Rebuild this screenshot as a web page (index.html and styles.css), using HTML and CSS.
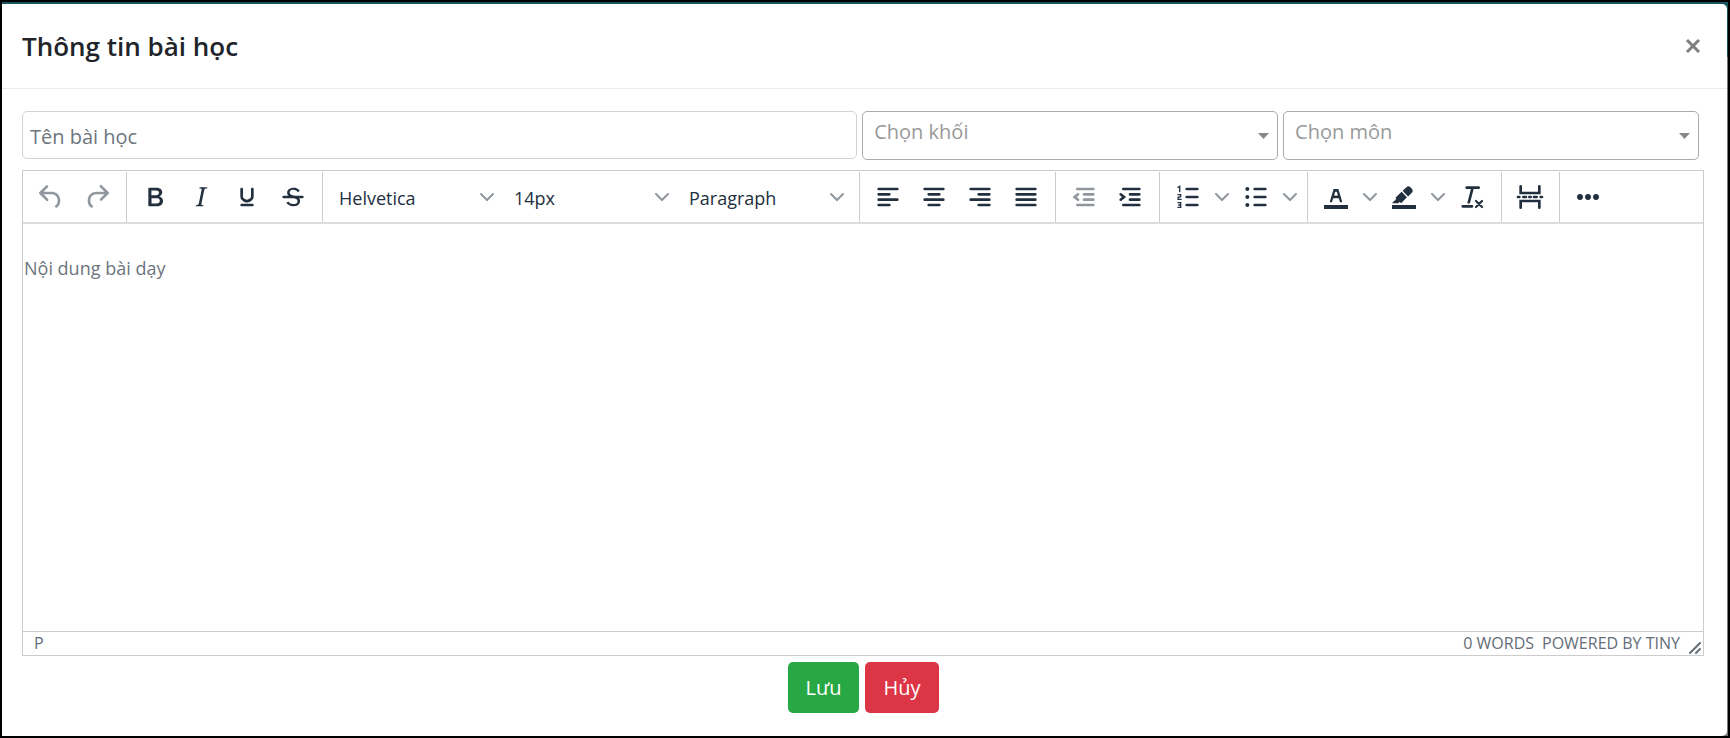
FILE: index.html
```
<!DOCTYPE html>
<html lang="vi">
<head>
    <meta charset="UTF-8">
    <title>Thông tin bài học</title>
    <link rel="stylesheet" href="styles.css">
</head>
<body>
<div class="page">
    <div class="modal">
        <!-- header -->
        <div class="modal-header">
            <h4 class="modal-title">Thông tin bài học</h4>
            <button class="close" type="button" aria-label="Close">
                <svg width="16" height="16" viewBox="0 0 16 16"><path d="M2 2l12 12M14 2L2 14" stroke="#7f7f7f" stroke-width="3"/></svg>
            </button>
        </div>
        <form class="modal-body">
            <div class="fields">
                <input class="name" type="text" placeholder="Tên bài học" aria-label="Tên bài học">
                <div class="pick">
                    <select aria-label="Chọn khối"><option>Chọn khối</option></select>
                    <svg width="12" height="6" viewBox="0 0 12 6"><path d="M0 0h11L5.500 6z" fill="#888"/></svg>
                </div>
                <div class="pick">
                    <select aria-label="Chọn môn"><option>Chọn môn</option></select>
                    <svg width="12" height="6" viewBox="0 0 12 6"><path d="M0 0h11L5.500 6z" fill="#888"/></svg>
                </div>
            </div>

            <!-- editor -->
            <div class="editor">
                <div class="toolbar">
                    <div class="group">
                        <button class="btn" type="button" aria-label="Undo" disabled>
                            <svg class="icon" viewBox="0 0 24 24"><path d="M6.400 8H12c3.700 0 6.200 2 6.800 5.100.6 2.700-.4 5.600-2.300 6.800a1 1 0 01-1-1.800c1.100-.6 1.800-2.700 1.400-4.600-.5-2.100-2.100-3.500-4.900-3.500H6.400l3.300 3.300a1 1 0 11-1.400 1.400l-5-5a1 1 0 010-1.400l5-5a1 1 0 011.400 1.400L6.400 8z"/></svg>
                        </button>
                        <button class="btn" type="button" aria-label="Redo" disabled>
                            <svg class="icon" viewBox="0 0 24 24"><path d="M17.600 10H12c-2.800 0-4.400 1.400-4.900 3.500-.4 2 .3 4 1.400 4.600a1 1 0 11-1 1.800c-2-1.200-2.900-4.100-2.300-6.800.6-3 3-5.100 6.800-5.100h5.600l-3.300-3.300a1 1 0 111.400-1.400l5 5a1 1 0 010 1.400l-5 5a1 1 0 01-1.400-1.400l3.300-3.300z"/></svg>
                        </button>
                    </div>
                    <div class="group">
                        <button class="btn" type="button" aria-label="Bold">
                            <svg class="icon" viewBox="0 0 24 24"><path d="M7.800 19c-.3 0-.5 0-.6-.2l-.2-.5V5.700c0-.2 0-.4.200-.5l.6-.2h5c1.500 0 2.700.3 3.500 1 .7.600 1.100 1.400 1.100 2.500a3 3 0 01-.6 1.900c-.4.600-1 1-1.600 1.200.4.100.9.300 1.300.6s.8.700 1 1.200c.4.400.5 1 .5 1.600 0 1.300-.4 2.300-1.300 3-.8.700-2.100 1-3.800 1H7.800zm5-8.300c.6 0 1.200-.1 1.600-.5.400-.3.600-.7.600-1.300 0-1.100-.8-1.700-2.300-1.700H9.300v3.500h3.400zm.5 6c.7 0 1.300-.1 1.700-.4.400-.4.600-.9.600-1.500s-.2-1-.7-1.400c-.4-.3-1-.4-2-.4H9.400v3.800h4z" fill-rule="evenodd"/></svg>
                        </button>
                        <button class="btn" type="button" aria-label="Italic">
                            <svg class="icon" viewBox="0 0 24 24"><path d="M16.700 4.700l-.1.900h-.3c-.6 0-1 0-1.400.3-.3.300-.4.600-.5 1.100l-2.100 9.800v.6c0 .5.400.8 1.400.8h.2l-.2.800H8l.2-.8h.2c1.100 0 1.800-.5 2-1.500l2-9.800.1-.5c0-.6-.4-.8-1.400-.8h-.3l.2-.9h5.800z"/></svg>
                        </button>
                        <button class="btn" type="button" aria-label="Underline">
                            <svg class="icon" viewBox="0 0 24 24"><path d="M16 5c.6 0 1 .4 1 1v5.500a4 4 0 01-.4 1.800l-1 1.400a5.300 5.300 0 01-5.500 1 5 5 0 01-1.600-1c-.5-.4-.8-.9-1.100-1.400a4 4 0 01-.4-1.800V6c0-.6.4-1 1-1s1 .4 1 1v5.500c0 .3 0 .6.200 1l.6.700a3.300 3.300 0 002.200.8 3.400 3.400 0 002.200-.8c.3-.2.400-.5.600-.8l.2-.9V6c0-.6.4-1 1-1zM8 17h8c.6 0 1 .4 1 1s-.4 1-1 1H8a1 1 0 010-2z"/></svg>
                        </button>
                        <button class="btn" type="button" aria-label="Strikethrough">
                            <svg class="icon" viewBox="0 0 24 24"><path d="M15.600 8.500c-.5-.7-1-1.100-1.300-1.300-.6-.4-1.300-.6-2-.6-2.700 0-2.800 1.700-2.800 2.100 0 1.600 1.800 2 3.200 2.300 4.400.9 4.600 2.800 4.600 3.900 0 1.400-.7 4.100-5 4.100A6.200 6.200 0 017 16.400l1.500-1.100c.4.600 1.600 2 3.700 2 1.600 0 2.500-.4 3-1.200.4-.8.300-2-.8-2.600-.7-.4-1.600-.7-2.900-1-1-.2-3.900-.8-3.900-3.600C7.600 6 10.300 5 12.400 5c2.900 0 4.200 1.600 4.700 2.400l-1.500 1.100z"/><path d="M5 11h14a1 1 0 010 2H5a1 1 0 010-2z"/></svg>
                        </button>
                    </div>
                    <div class="group">
                        <div class="drop">
                            <select aria-label="Fonts"><option>Helvetica</option></select>
                            <svg class="chevron" viewBox="0 0 14 14"><path d="M1 4l6 6 6-6"/></svg>
                        </div>
                        <div class="drop">
                            <select aria-label="Font sizes"><option>14px</option></select>
                            <svg class="chevron" viewBox="0 0 14 14"><path d="M1 4l6 6 6-6"/></svg>
                        </div>
                        <div class="drop">
                            <select aria-label="Blocks"><option>Paragraph</option></select>
                            <svg class="chevron" viewBox="0 0 14 14"><path d="M1 4l6 6 6-6"/></svg>
                        </div>
                    </div>
                    <div class="group">
                        <button class="btn" type="button" aria-label="Align left">
                            <svg class="icon line" viewBox="0 0 24 24"><path d="M5 6h14M5 10h8M5 14h14M5 18h8"/></svg>
                        </button>
                        <button class="btn" type="button" aria-label="Align center">
                            <svg class="icon line" viewBox="0 0 24 24"><path d="M5 6h14M8 10h8M5 14h14M8 18h8"/></svg>
                        </button>
                        <button class="btn" type="button" aria-label="Align right">
                            <svg class="icon line" viewBox="0 0 24 24"><path d="M5 6h14M11 10h8M5 14h14M11 18h8"/></svg>
                        </button>
                        <button class="btn" type="button" aria-label="Justify">
                            <svg class="icon line" viewBox="0 0 24 24"><path d="M5 6h14M5 10h14M5 14h14M5 18h14"/></svg>
                        </button>
                    </div>
                    <div class="group">
                        <button class="btn" type="button" aria-label="Decrease indent" disabled>
                            <svg class="icon line" viewBox="0 0 24 24"><path d="M7 6h12M12 10h7M12 14h7M7 18h12M7.500 10L5 12l2.500 2"/></svg>
                        </button>
                        <button class="btn" type="button" aria-label="Increase indent">
                            <svg class="icon line" viewBox="0 0 24 24"><path d="M7 6h12M12 10h7M12 14h7M7 18h12M5 10l2.500 2L5 14"/></svg>
                        </button>
                    </div>
                    <div class="group">
                        <button class="btn" type="button" aria-label="Numbered list">
                            <svg class="icon line" viewBox="0 0 24 24"><path d="M11 6h8M11 12h8M11 18h8"/><path class="thin" d="M4.500 4.800L5.800 4v4M4.500 10.200h2v1.600l-1.900.4v1.600h2.200M4.500 16.200h2v3.600h-2M5 18h1.500"/></svg>
                        </button>
                        <button class="arrow" type="button" aria-label="Numbered list styles">
                            <svg class="chevron" viewBox="0 0 14 14"><path d="M1 4l6 6 6-6"/></svg>
                        </button>
                        <button class="btn" type="button" aria-label="Bullet list">
                            <svg class="icon line" viewBox="0 0 24 24"><path d="M11 6h8M11 12h8M11 18h8"/><path class="dots" d="M5.500 6h0M5.500 12h0M5.500 18h0"/></svg>
                        </button>
                        <button class="arrow" type="button" aria-label="Bullet list styles">
                            <svg class="chevron" viewBox="0 0 14 14"><path d="M1 4l6 6 6-6"/></svg>
                        </button>
                    </div>
                    <div class="group">
                        <button class="btn" type="button" aria-label="Text color">
                            <svg class="icon" viewBox="0 0 24 24"><path d="M3 18h18v3H3zM8.700 16h-.8a.5.5 0 01-.5-.6l2.700-9c.1-.3.3-.4.5-.4h2.800c.2 0 .4.100.5.400l2.700 9a.5.5 0 01-.5.600h-.8a.5.5 0 01-.4-.4l-.7-2.200c0-.3-.3-.4-.5-.4h-3.400c-.2 0-.4.100-.5.400l-.7 2.200c0 .3-.2.400-.4.400zm2.600-7.600l-.6 2a.5.500 0 00.5.600h1.600a.5.500 0 00.5-.6l-.6-2c0-.3-.3-.4-.5-.4h-.4c-.2 0-.4.100-.5.400z" fill-rule="evenodd"/></svg>
                        </button>
                        <button class="arrow" type="button" aria-label="Text color menu">
                            <svg class="chevron" viewBox="0 0 14 14"><path d="M1 4l6 6 6-6"/></svg>
                        </button>
                        <button class="btn" type="button" aria-label="Background color">
                            <svg class="icon" viewBox="0 0 24 24"><path d="M3 18h18v3H3z"/><path d="M7.700 16.700H3l3.300-3.300-.7-.8L10.200 8l4 4.100-4 4.200c-.2.200-.6.200-.8 0l-.6-.7-1.100 1.100zm5-7.500L11 7.400l3-2.900a2 2 0 012.600 0L18 6c.7.700.7 2 0 2.700l-2.900 2.900-1.800-1.800-.5-.6"/></svg>
                        </button>
                        <button class="arrow" type="button" aria-label="Background color menu">
                            <svg class="chevron" viewBox="0 0 14 14"><path d="M1 4l6 6 6-6"/></svg>
                        </button>
                        <button class="btn" type="button" aria-label="Clear formatting">
                            <svg class="icon" viewBox="0 0 24 24"><path d="M13.200 6a1 1 0 010 .2l-2.600 10a1 1 0 01-1 .8h-.2a.8.800 0 01-.8-1l2.600-10H8a1 1 0 110-2h9a1 1 0 010 2h-3.800zM5 18h7a1 1 0 010 2H5a1 1 0 010-2z"/><path d="M15 15l4.500 4.500M19.500 15L15 19.500" stroke="currentColor" stroke-width="1.600" stroke-linecap="round"/></svg>
                        </button>
                    </div>
                    <div class="group">
                        <button class="btn" type="button" aria-label="Page break">
                            <svg class="icon line" viewBox="0 0 24 24"><path d="M5 4v5h14V4M5 20v-5h14v5"/><path class="dash" d="M3 12h1M7 12h2M11.500 12h1M15 12h2M20 12h1"/></svg>
                        </button>
                    </div>
                    <div class="group">
                        <button class="btn" type="button" aria-label="More">
                            <svg class="icon" viewBox="0 0 24 24"><circle cx="6" cy="12" r="2.200"/><circle cx="12" cy="12" r="2.200"/><circle cx="18" cy="12" r="2.200"/></svg>
                        </button>
                    </div>
                </div>
                <textarea class="content" placeholder="Nội dung bài dạy" aria-label="Nội dung bài dạy"></textarea>
                <div class="statusbar">
                    <span class="path">P</span>
                    <span>0 WORDS</span>
                    <a href="#">POWERED BY TINY</a>
                    <svg class="resize" viewBox="0 0 14 14"><path d="M2 12L12 2M8 12l4-4"/></svg>
                </div>
            </div>

            <div class="actions">
                <button class="save" type="button">Lưu</button>
                <button class="cancel" type="button">Hủy</button>
            </div>
        </form>
    </div>
</div>
</body>
</html>
```
FILE: styles.css
```
*{
    box-sizing: border-box;
}
body{
    margin: 0;
    font-family: "Open Sans", "Noto Sans", sans-serif;
    font-size: 20px;
    color: #212529;
}
button, input, select, textarea{
    font-family: inherit;
    margin: 0;
}
.page{
    display: flex;
    min-height: 100vh;
    border: 2px solid #000;
    background: linear-gradient(#17555f 55px, #777 55px);
    padding: 2px 1px 0 0;
}
.modal{
    flex: 1;
    display: flex;
    flex-direction: column;
    background-color: #fff;
    border-radius: 0 5px 5px 0;
}
/* header */
.modal-header{
    display: flex;
    justify-content: space-between;
    align-items: center;
    height: 85px;
    padding: 0 26px 0 20px;
    border-bottom: 1px solid #e9ecef;
}
.modal-title{
    margin: 0;
    font-size: 26px;
    font-weight: 600;
    line-height: 38px;
}
.close{
    display: flex;
    padding: 0;
    border: 0;
    background: none;
}
.modal-body{
    flex: 1;
    display: flex;
    flex-direction: column;
    padding: 22px 23px 23px 20px;
}
/* fields */
.fields{
    display: flex;
    align-items: flex-start;
    gap: 5px;
    padding-right: 5px;
    margin-bottom: 10px;
}
.name{
    flex: 1;
    min-width: 0;
    height: 48px;
    padding: 2px 7px 0;
    font-size: 20px;
    border: 1px solid #ced4da;
    border-radius: 5px;
}
.name::placeholder{
    color: #6c757d;
}
.pick{
    width: 24.8%;
    display: grid;
    align-items: center;
}
.pick select{
    grid-area: 1 / 1;
    width: 100%;
    height: 49px;
    padding: 0 30px 9px 11px;
    font-size: 20px;
    color: #999;
    background-color: #fff;
    border: 1px solid #aaa;
    border-radius: 5px;
    appearance: none;
}
.pick svg{
    grid-area: 1 / 1;
    justify-self: end;
    margin-right: 8px;
    pointer-events: none;
}
/* editor */
.editor{
    flex: 1;
    display: flex;
    flex-direction: column;
    border: 1px solid #ccc;
}
.toolbar{
    display: flex;
    padding-top: 1px;
    border-bottom: 2px solid #ddd;
}
.group{
    display: flex;
    align-items: center;
    height: 50px;
    padding: 0 6px 0 5px;
    border-right: 1px solid #ccc;
}
.group:last-child{
    border-right: 0;
}
.btn, .arrow{
    display: flex;
    align-items: center;
    justify-content: center;
    width: 46px;
    height: 46px;
    padding: 0;
    border: 0;
    background: none;
    color: #222f3e;
}
.btn:disabled{
    color: #91979f;
}
.arrow{
    width: 22px;
}
.icon{
    width: 32px;
    height: 32px;
    fill: currentColor;
}
.line{
    fill: none;
    stroke: currentColor;
    stroke-width: 2;
    stroke-linecap: round;
}
.line .thin{
    stroke-width: 1;
}
.line .dots{
    stroke-width: 3;
}
.line .dash{
    stroke-width: 2;
}
.chevron{
    width: 14px;
    height: 14px;
    fill: none;
    stroke: #91979f;
    stroke-width: 2;
    stroke-linecap: round;
    pointer-events: none;
}
.drop{
    display: grid;
    align-items: center;
    width: 175px;
}
.drop select{
    grid-area: 1 / 1;
    width: 100%;
    height: 46px;
    padding: 2px 30px 0 11px;
    font-size: 18px;
    color: #222f3e;
    background: none;
    border: 0;
    appearance: none;
}
.drop .chevron{
    grid-area: 1 / 1;
    justify-self: end;
    margin-right: 9px;
}
.content{
    flex: 1;
    display: block;
    width: 100%;
    padding: 32px 1px;
    border: 0;
    resize: none;
    font-size: 18px;
    line-height: 25px;
}
.content::placeholder{
    color: #6c757d;
}
.statusbar{
    display: flex;
    align-items: center;
    gap: 8px;
    height: 24px;
    padding: 0 1px 0 11px;
    border-top: 1px solid #ccc;
    font-size: 16px;
    line-height: 23px;
    color: #646d78;
}
.statusbar .path{
    flex: 1;
}
.statusbar a{
    color: inherit;
    text-decoration: none;
}
.resize{
    width: 14px;
    height: 14px;
    align-self: flex-end;
    fill: none;
    stroke: #646d78;
    stroke-width: 2;
    stroke-linecap: round;
}
/* buttons */
.actions{
    display: flex;
    justify-content: center;
    gap: 6px;
    padding-top: 6px;
}
.actions button{
    height: 51px;
    padding: 0 17px;
    border: 1px solid transparent;
    border-radius: 5px;
    font-size: 20px;
    color: #fff;
}
.actions .save{
    background-color: #28a745;
}
.actions .cancel{
    background-color: #dc3545;
}
```
